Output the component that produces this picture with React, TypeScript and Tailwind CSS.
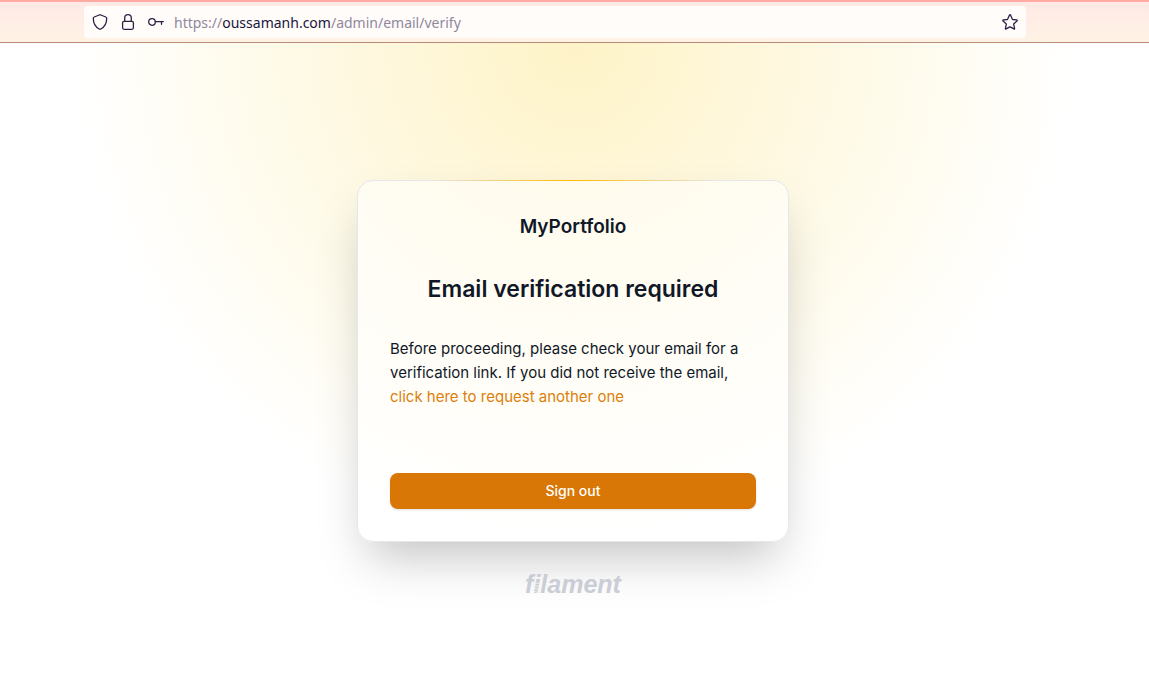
function ShieldIcon() {
  return (
    <svg viewBox="0 0 16 16" className="size-4" fill="none" stroke="currentColor" strokeWidth="1.3" strokeLinejoin="round" aria-hidden="true">
      <path d="M8 .8c.3 0 .5.1.8.2l5 2c.6.2.9.7.9 1.300 0 5.200-2.100 8.700-5.900 10.700-.5.3-1.100.3-1.600 0C3.400 13 1.300 9.500 1.300 4.300c0-.6.3-1.100.9-1.300l5-2c.3-.1.5-.2.8-.2z" />
    </svg>
  );
}

function LockIcon() {
  return (
    <svg viewBox="0 0 16 16" className="size-4" fill="none" stroke="currentColor" strokeWidth="1.3" aria-hidden="true">
      <rect x="2.600" y="7.300" width="10.800" height="8" rx="1.500" />
      <path d="M4.700 7.300V4a3.300 3.300 0 0 1 6.600 0v3.300" />
    </svg>
  );
}

function KeyIcon() {
  return (
    <svg viewBox="0 0 16 16" className="size-4" fill="none" stroke="currentColor" strokeWidth="1.3" strokeLinecap="round" aria-hidden="true">
      <circle cx="4" cy="8" r="3.300" />
      <path d="M7.300 7.600h8M13.500 7.600v2.700" />
    </svg>
  );
}

function StarIcon() {
  return (
    <svg viewBox="0 0 16 16" className="size-4" fill="none" stroke="currentColor" strokeWidth="1.3" strokeLinejoin="round" aria-hidden="true">
      <path d="M7.400 1.200q.6-.9 1.200 0l1.700 3.900q.1.300.5.400l3.700.4q1.200.2.400 1.100l-3 2.700q-.3.300-.2.600l.9 4q.1 1-.8.600l-3.500-2q-.3-.2-.6 0l-3.500 2q-.9.400-.8-.6l.9-4q.1-.3-.2-.6l-3-2.700q-.8-.9.4-1.100l3.700-.4q.4-.1.500-.4z" />
    </svg>
  );
}

function AddressBar() {
  return (
    <header className="border-t-2 border-b border-t-[#ffaaa2] border-b-[#b98979] bg-linear-to-b from-[#ffe9e6] to-[#fff3e4] pt-1 pr-[123px] pb-1 pl-[84px] text-[#2b2147]">
      <div className="flex h-8 items-center rounded-[4px] bg-[#fffcfa] px-2">
        <div className="flex items-center gap-3">
          <button type="button" aria-label="Tracking protection"><ShieldIcon /></button>
          <button type="button" aria-label="Site security"><LockIcon /></button>
          <button type="button" aria-label="Saved logins"><KeyIcon /></button>
        </div>
        <div role="textbox" aria-label="Address" tabIndex={0} className="ml-2.5 min-w-0 flex-1 truncate pt-0.5 font-['Noto_Sans',sans-serif] text-sm text-[#8f889c]">
          https://<span className="text-[#20163c]">oussamanh.com</span>/admin/email/verify
        </div>
        <button type="button" aria-label="Bookmark this page"><StarIcon /></button>
      </div>
    </header>
  );
}

function FilamentLogo() {
  return (
    <a href="#filament" className="relative mt-8 block font-['Liberation_Sans',sans-serif] text-[25px] leading-5 font-bold text-[#cacdd5] italic">
      filament
      <svg viewBox="0 0 10 20" className="absolute top-0 left-2 h-5 w-2.5" fill="none" stroke="#ededed" strokeWidth="1" aria-hidden="true">
        <path d="M0 8l7 2M0 11l7 2M0 14l7 2M0 17l7 2" />
      </svg>
    </a>
  );
}

export default function App() {
  return (
    <div className="flex min-h-screen flex-col bg-white font-[Inter,sans-serif]">
      <AddressBar />
      <main className="flex flex-1 flex-col items-center bg-[radial-gradient(circle_at_top,#fef3c7,#fff_500px)] pt-[137px] pr-[3px] pb-12">
        <section className="relative flex w-full max-w-[432px] flex-col rounded-2xl border border-gray-200 bg-white/55 p-8 text-gray-900 shadow-2xl">
          <div className="absolute -top-px left-1/2 h-px w-2/3 -translate-x-1/2 bg-linear-to-r from-transparent via-amber-400 to-transparent" />
          <div className="text-center text-[19px] leading-7 font-semibold">MyPortfolio</div>
          <h1 className="mt-[30px] text-center text-[23px] leading-9 font-semibold">Email verification required</h1>
          <p className="mt-[30px] text-[15px] leading-6">
            Before proceeding, please check your email for a verification link. If you did not receive the email,{" "}
            <a href="#resend" className="block text-[#dc7f0a]">click here to request another one</a>
          </p>
          <button type="button" className="mt-16 h-9 rounded-lg bg-[#d97706] text-sm font-medium text-white shadow-sm">Sign out</button>
        </section>
        <FilamentLogo />
      </main>
    </div>
  );
}
